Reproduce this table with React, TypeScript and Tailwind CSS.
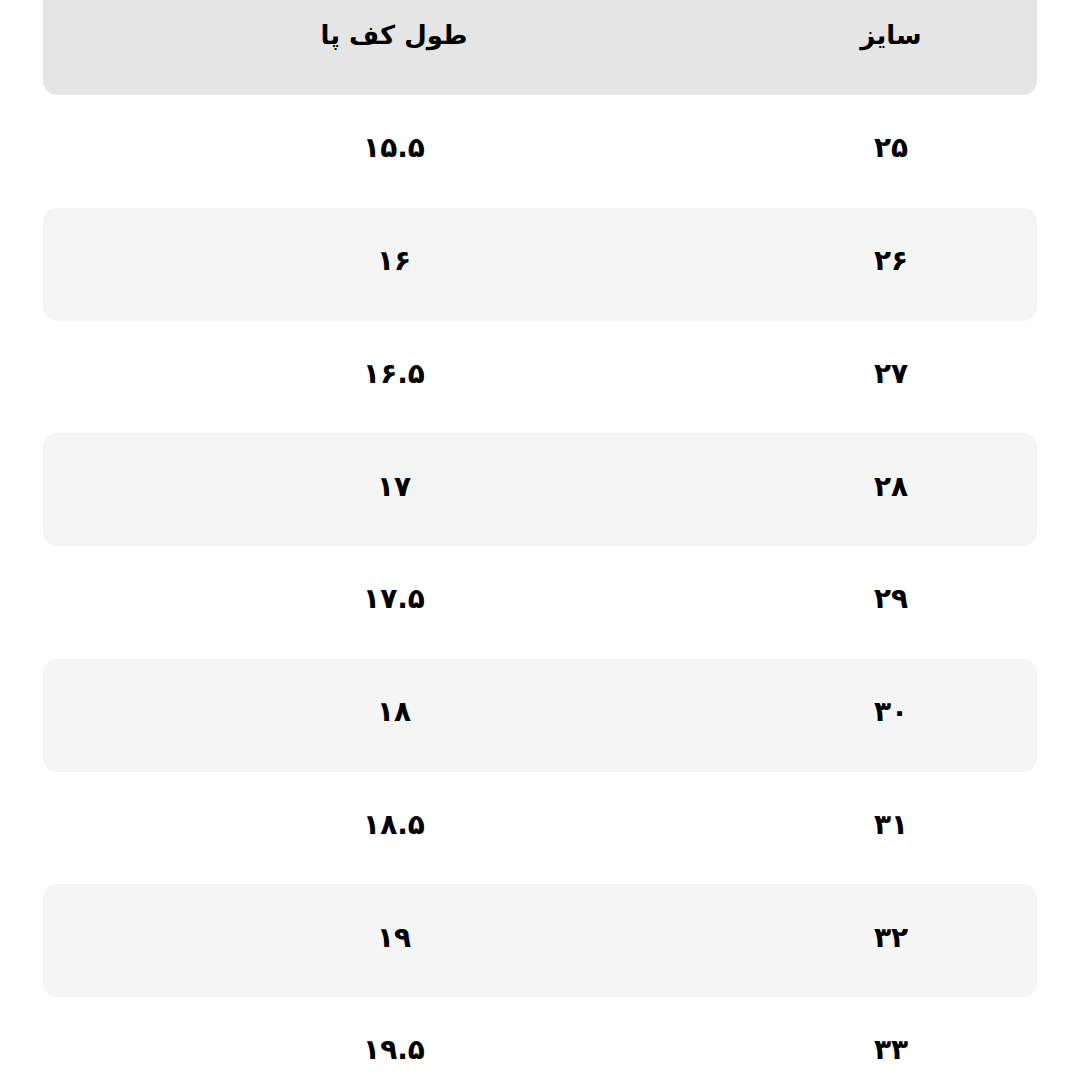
const ROWS = [
  ['۲۵', '۱۵.۵'],
  ['۲۶', '۱۶'],
  ['۲۷', '۱۶.۵'],
  ['۲۸', '۱۷'],
  ['۲۹', '۱۷.۵'],
  ['۳۰', '۱۸'],
  ['۳۱', '۱۸.۵'],
  ['۳۲', '۱۹'],
  ['۳۳', '۱۹.۵'],
];

export default function App() {
  return (
    <div
      dir="rtl"
      className="h-[1080px] w-[1080px] overflow-hidden bg-white px-[43px] font-['DejaVu_Sans',sans-serif] text-black"
    >
      {/* Header (top edge is cut off in the screenshot) */}
      <div className="-mt-[18px] grid h-[113px] grid-cols-[292px_1fr] items-center rounded-[14px] bg-[#e5e5e5] pb-[6px] text-[26px] font-bold">
        <div className="text-center">سایز</div>
        <div className="text-center">طول کف پا</div>
      </div>

      {ROWS.map(([size, length], i) => (
        <div
          key={size}
          className={
            i % 2 === 1
              ? 'grid h-[112.75px] grid-cols-[292px_1fr] items-center rounded-[14px] bg-[#f5f5f5] pb-[6px] text-[28px] font-bold'
              : 'grid h-[112.75px] grid-cols-[292px_1fr] items-center rounded-[14px] bg-white pb-[6px] text-[28px] font-bold'
          }
        >
          <div className="text-center">{size}</div>
          <div className="text-center">{length}</div>
        </div>
      ))}
    </div>
  );
}
